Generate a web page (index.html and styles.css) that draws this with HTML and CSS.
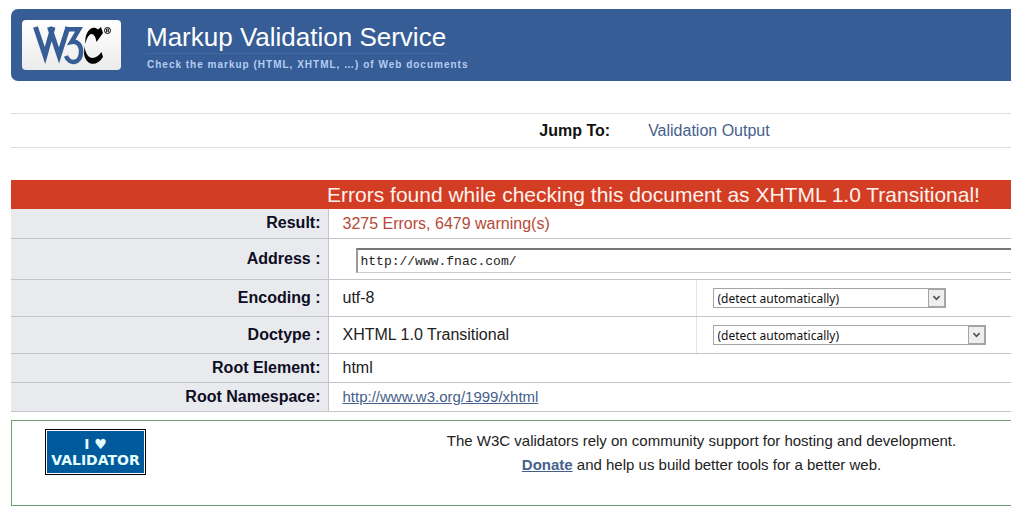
FILE: index.html
```html
<!DOCTYPE html>
<html lang="en">
<head>
<meta charset="utf-8">
<title>Markup Validation Service</title>
<link rel="stylesheet" href="styles.css">
</head>
<body>
<header class="banner">
  <a class="logo" href="#" aria-label="W3C">
    <svg class="logo-mark" viewBox="0 0 99 50" width="99" height="50">
      <g fill="none" stroke="#365d95" stroke-width="5" stroke-miterlimit="10">
        <path d="M13.500 7L23 35.500L31 7M27.500 7L37 35.500L46 7"/>
        <path d="M43 9.300H57L49.500 22C56 20.500 59.500 26 59 32.500C58.500 43.500 47.500 45 44 36" stroke-width="4.500"/>
      </g>
      <path d="M79 7L81 13L74.500 22C73 11 66 11 63.500 24C62 12 70 4 76 9.500Z"/>
      <path d="M62.500 26C64 39 72 42 79.500 32L81 37C75 47 64 46 62 34Z"/>
      <circle cx="85.500" cy="10.500" r="3" fill="none" stroke="#000"/>
      <path d="M84.500 12.500V9H86.500V11H84.500M86 11L87 12.500" fill="none" stroke="#000" stroke-width=".8"/>
    </svg>
  </a>
  <div class="titles">
    <h1 class="title">Markup Validation Service</h1>
    <p class="tagline">Check the markup (HTML, XHTML, …) of Web documents</p>
  </div>
</header>

<main class="content">
  <nav class="jump">
    <strong class="jump-label">Jump To:</strong>
    <a class="jump-link" href="#output">Validation Output</a>
  </nav>

  <form id="output">
    <h2 class="invalid">Errors found while checking this document as XHTML 1.0 Transitional!</h2>
    <table class="results">
      <colgroup><col class="col-label"><col class="col-value"><col></colgroup>
      <tr>
        <th scope="row">Result:</th>
        <td colspan="2" class="errors">3275 Errors, 6479 warning(s)</td>
      </tr>
      <tr class="row-address">
        <th scope="row"><label for="uri">Address :</label></th>
        <td colspan="2" class="address"><input class="uri" id="uri" type="text" value="http://www.fnac.com/"></td>
      </tr>
      <tr class="row-option">
        <th scope="row"><label for="charset">Encoding :</label></th>
        <td>utf-8</td>
        <td class="option"><span class="picker"><select class="select select-charset" id="charset"><option>(detect automatically)</option></select><svg class="arrow" viewBox="0 0 17 18" width="17" height="18"><path d="M5 7l3.500 3.500L12 7"/></svg></span></td>
      </tr>
      <tr class="row-option">
        <th scope="row"><label for="doctype">Doctype :</label></th>
        <td>XHTML 1.0 Transitional</td>
        <td class="option"><span class="picker"><select class="select select-doctype" id="doctype"><option>(detect automatically)</option></select><svg class="arrow" viewBox="0 0 17 18" width="17" height="18"><path d="M5 7l3.500 3.500L12 7"/></svg></span></td>
      </tr>
      <tr>
        <th scope="row">Root Element:</th>
        <td colspan="2">html</td>
      </tr>
      <tr>
        <th scope="row">Root Namespace:</th>
        <td colspan="2"><a class="link namespace" href="#">http://www.w3.org/1999/xhtml</a></td>
      </tr>
    </table>
  </form>

  <section class="donate">
    <a class="badge" href="#"><span>I ♥</span><span>VALIDATOR</span></a>
    <p class="appeal">The W3C validators rely on community support for hosting and development.<br><a class="link donate-link" href="#">Donate</a> and help us build better tools for a better web.</p>
  </section>
</main>
</body>
</html>
```
FILE: styles.css
```css
* { box-sizing: border-box; }
body {
  margin: 0;
  padding: 9px 0 11px 11px;
  background: #fff;
  color: #222;
  font: 16px/24px "Liberation Sans", Arial, sans-serif;
}
h1, h2, p { margin: 0; font-weight: normal; }
.banner {
  display: flex;
  gap: 25px;
  padding: 11px;
  background: #365d95;
  border-radius: 7px 0 0 7px;
}
.logo {
  width: 99px;
  height: 50px;
  border-radius: 4px;
  background: linear-gradient(#fff, #ececec);
}
.logo-mark { display: block; }
.titles { height: 50px; }
.title { padding-top: 1px; font-size: 26px; line-height: 32px; color: #fff; border-bottom: 1px solid #436aa3; width: fit-content; }
.tagline {
  padding-left: 1px;
  font-size: 10px;
  line-height: 22px;
  font-weight: bold;
  letter-spacing: 1px;
  color: #b5cdf3;
}
.jump {
  display: flex;
  justify-content: center;
  gap: 38px;
  margin: 32px 0;
  padding: 5px 0 4px 287px;
  border: 1px solid #ddd;
  border-width: 1px 0;
}
.jump-label { color: #111; }
.jump-link { color: #45618b; text-decoration: none; }
.invalid {
  padding-left: 285px;
  background: #d23d24;
  color: #fff3ee;
  font-size: 21px;
  line-height: 29px;
  text-align: center;
  white-space: nowrap;
}
.results { width: 100%; table-layout: fixed; border-collapse: collapse; }
.col-label { width: 317px; }
.col-value { width: 368px; }
.results th, .results td { height: 29px; padding: 1px 0 0 14px; border-bottom: 1px solid #c3c5c9; text-align: left; }
.results th { padding: 0 7px 0 8px; background: #e9eaee; border-right: 1px solid #c3c5c9; color: #0d0d24; text-align: right; }
.results .errors { color: #b54a38; }
.results .row-address th { height: 41px; }
.results .address { padding: 4px 0 0 27px; }
.uri {
  display: block;
  width: 100%;
  height: 25px;
  padding: 0 3px;
  border: 1px solid #ccc;
  border-width: 2px 0 1px 2px;
  border-color: #777 #ccc #ccc #999;
  background: #fff;
  color: #222;
  font: 13px "Liberation Mono", monospace;
}
.results .row-option th { height: 37px; }
.results .row-option td { padding-top: 0; }
.results .option { padding-left: 16px; border-left: 1px solid #e4e4e4; }
.picker { position: relative; display: inline-block; vertical-align: middle; }
.select {
  display: block;
  appearance: none;
  height: 20px;
  padding: 0 4px;
  border: 1px solid #a5a5a5;
  border-radius: 0;
  background: #fff;
  color: #111;
  font: 12px "Noto Sans", sans-serif;
}
.select-charset { width: 233px; }
.select-doctype { width: 273px; }
.arrow {
  position: absolute;
  top: 1px;
  right: 1px;
  border: 1px solid #a5a5a5;
  background: #eee;
  fill: none;
  stroke: #555;
  stroke-width: 2;
  pointer-events: none;
}
.link { color: #45618b; text-decoration: underline; }
.namespace { font-size: 15px; }
.donate {
  display: flex;
  min-height: 86px;
  margin-top: 8px;
  padding: 8px 0 8px 33px;
  border: 1px solid #6d9e6d;
  border-right: 0;
}
.badge {
  display: flex;
  flex-direction: column;
  align-items: center;
  justify-content: center;
  width: 101px;
  height: 46px;
  border: 1px solid #000;
  outline: 1px solid #fff;
  outline-offset: -2px;
  background: #005a9c;
  color: #e6ffff;
  font: bold 14px/16px "DejaVu Sans", sans-serif;
  text-decoration: none;
}
.appeal { flex: 1; padding-left: 246px; font-size: 15px; text-align: center; white-space: nowrap; }
.donate-link { font-weight: bold; }
```
